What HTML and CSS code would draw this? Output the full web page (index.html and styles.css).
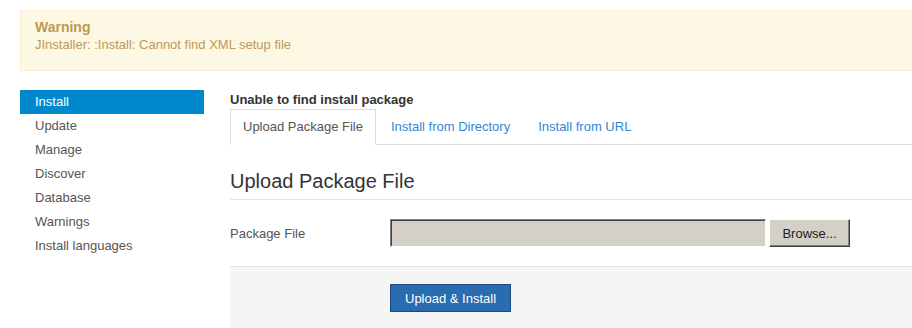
FILE: index.html
```html
<!DOCTYPE html>
<html lang="en">
<head>
    <meta charset="UTF-8">
    <title>Extension Manager: Install</title>
    <link rel="stylesheet" href="styles.css">
</head>
<body>
    <div class="page">
        <div class="alert">
            <h4 class="alert-heading">Warning</h4>
            <p class="alert-message">JInstaller: :Install: Cannot find XML setup file</p>
        </div>

        <div class="layout">
            <ul class="sidebar">
                <li class="active"><a href="#">Install</a></li>
                <li><a href="#">Update</a></li>
                <li><a href="#">Manage</a></li>
                <li><a href="#">Discover</a></li>
                <li><a href="#">Database</a></li>
                <li><a href="#">Warnings</a></li>
                <li><a href="#">Install languages</a></li>
            </ul>

            <div class="main">
                <p class="status">Unable to find install package</p>
                <ul class="tabs">
                    <li class="active"><a href="#">Upload Package File</a></li>
                    <li><a href="#">Install from Directory</a></li>
                    <li><a href="#">Install from URL</a></li>
                </ul>

                <form class="upload-form">
                    <h2 class="legend">Upload Package File</h2>
                    <div class="control-group">
                        <label class="control-label" for="install_package">Package File</label>
                        <div class="controls">
                            <input type="text" id="install_package" class="file-field" readonly>
                            <button type="button" class="browse">Browse...</button>
                        </div>
                    </div>
                    <div class="form-actions">
                        <button type="button" class="btn-primary">Upload &amp; Install</button>
                    </div>
                </form>
            </div>
        </div>
    </div>
</body>
</html>
```

FILE: styles.css
```css
body {
    margin: 0;
    font-family: "Liberation Sans", Arial, sans-serif;
    font-size: 13px;
    line-height: 18px;
    color: #333;
    background-color: white;
    overflow: hidden;
}

.page {
    padding: 10px 0 0 20px;
}

.alert {
    background-color: #fcf8e3;
    border: 1px solid #fbeed5;
    border-right: none;
    padding: 7px 14px 16px 14px;
    color: #c09853;
}

.alert-heading {
    margin: 0;
    font-size: 14px;
    font-weight: bold;
    line-height: 18px;
}

.alert-message {
    margin: 0;
}

.layout {
    display: flex;
    gap: 26px;
    margin-top: 19px;
}

.sidebar {
    list-style: none;
    margin: 0;
    padding: 0;
    width: 184px;
    flex-shrink: 0;
}

.sidebar a {
    display: block;
    padding: 3px 15px;
    color: #555;
    text-decoration: none;
}

.sidebar .active a {
    background-color: #0088cc;
    color: white;
}

.main {
    flex: 1;
}

.status {
    margin: 1px 0 0 0;
    font-weight: bold;
}

.tabs {
    list-style: none;
    margin: 0;
    padding: 0;
    display: flex;
    border-bottom: 1px solid #ddd;
}

.tabs li {
    margin-bottom: -1px;
    margin-right: 2px;
}

.tabs a {
    display: block;
    padding: 8px 12px;
    border: 1px solid transparent;
    color: #2f87d6;
    text-decoration: none;
}

.tabs .active a {
    color: #555;
    border-color: #ddd;
    border-bottom-color: white;
    background-color: white;
}

.upload-form {
    margin-top: 18px;
}

.legend {
    margin: 0 0 19px 0;
    font-size: 20px;
    font-weight: normal;
    line-height: 36px;
    color: #333;
    border-bottom: 1px solid #e5e5e5;
}

.control-group {
    display: flex;
    align-items: center;
}

.control-label {
    width: 160px;
    color: #555;
    padding-top: 2px;
}

.controls {
    display: flex;
    gap: 3px;
}

.file-field {
    box-sizing: border-box;
    width: 376px;
    height: 28px;
    margin: 0;
    background-color: #d4d0c8;
    border-style: solid;
    border-width: 1px;
    border-color: #808080 #ffffff #ffffff #808080;
    box-shadow: inset 1px 1px 0 #404040;
    outline: none;
}

.browse {
    box-sizing: border-box;
    width: 81px;
    height: 28px;
    margin: 0;
    background-color: #d4d0c8;
    font-family: "Liberation Sans", Arial, sans-serif;
    font-size: 13px;
    color: #222;
    border-style: solid;
    border-width: 1px;
    border-color: #ffffff #404040 #404040 #ffffff;
    box-shadow: inset -1px -1px 0 #808080;
}

.form-actions {
    margin-top: 19px;
    padding: 17px 0 20px 160px;
    background-color: #f5f5f5;
    border-top: 1px solid #e5e5e5;
}

.btn-primary {
    box-sizing: border-box;
    height: 28px;
    padding: 0 14px;
    font-family: "Liberation Sans", Arial, sans-serif;
    font-size: 13px;
    color: white;
    background-color: #2a6cb0;
    border: 1px solid #1c4a7c;
}
```
